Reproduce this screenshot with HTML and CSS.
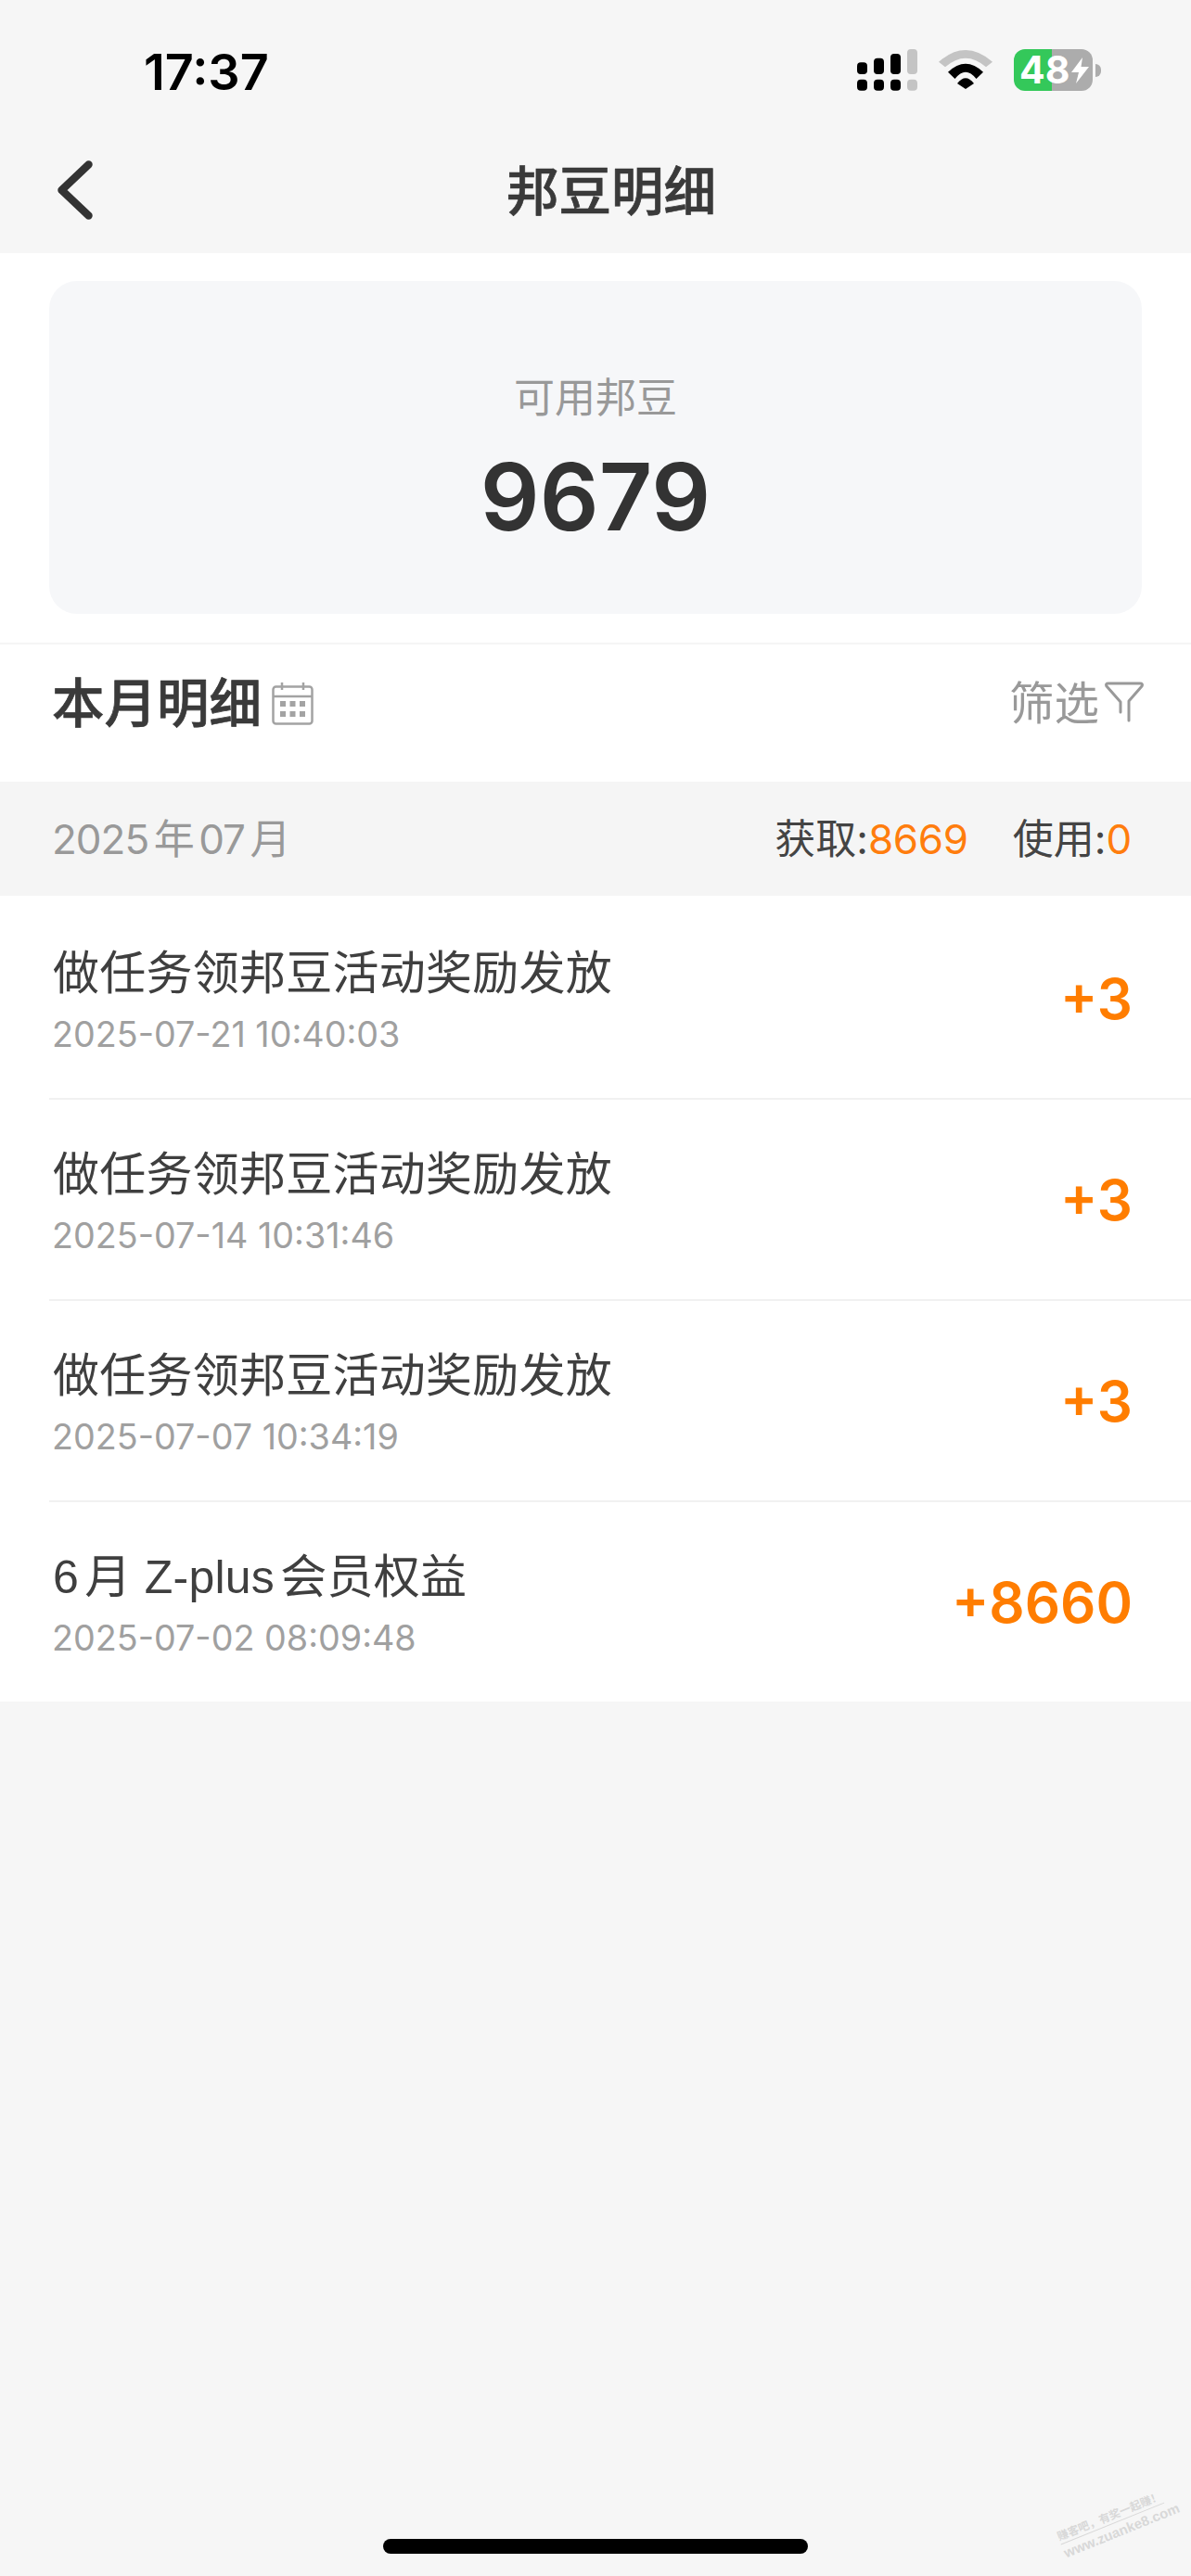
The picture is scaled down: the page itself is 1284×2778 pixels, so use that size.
FILE: index.html
```html
<!DOCTYPE html>
<html lang="zh-CN">
<head>
<meta charset="utf-8">
<title>邦豆明细</title>
<link rel="stylesheet" href="styles.css">
</head>
<body>
<div class="page">
  <header class="top">
    <div class="status">
      <span class="clock">17:37</span>
      <div class="status-icons">
        <svg class="signal" viewBox="0 0 65 45" width="65" height="45">
          <g fill="#000">
            <rect x="0" y="14.3" width="11" height="12.7" rx="4"/>
            <rect x="18" y="9.7" width="11" height="17.3" rx="4"/>
            <rect x="36" y="5" width="11" height="22" rx="4"/>
            <rect x="0" y="32.7" width="11" height="12" rx="4"/>
            <rect x="18" y="32.7" width="11" height="12" rx="4"/>
            <rect x="36" y="32.7" width="11" height="12" rx="4"/>
          </g>
          <g fill="#c4c4c4">
            <rect x="54" y="0" width="11" height="27" rx="4"/>
            <rect x="54" y="32.7" width="11" height="12" rx="4"/>
          </g>
        </svg>
        <svg class="wifi" viewBox="0 0 58 42" width="58" height="42">
          <path fill="#c4c4c4" d="M0 12.7Q29-12.7 58 12.7L51 18.3Q29-.9 7 18.3Z"/>
          <path fill="#000" d="M10 23.7Q29 5.7 48 23.7L40.5 31Q29 16.4 17.5 31Z"/>
          <path fill="#000" d="M20 36Q29 24.6 38 36L29 42Z"/>
        </svg>
        <div class="battery-wrap">
          <div class="battery">
            <span class="battery-num">48</span>
            <svg class="bolt" viewBox="0 0 19 28" width="19" height="28"><path fill="#fff" d="M12 0L0 16H8L5 28L19 10H10.5Z"/></svg>
          </div>
          <span class="battery-nub"></span>
        </div>
      </div>
    </div>
    <nav class="nav">
      <svg class="back" viewBox="0 0 40 64" width="40" height="64"><path d="M34.500 4.500L5.500 32L34.500 59.500" fill="none" stroke="#333" stroke-width="8.500" stroke-linecap="round" stroke-linejoin="round"/></svg>
      <h1 class="nav-title">邦豆明细</h1>
    </nav>
  </header>

  <section class="balance">
    <div class="balance-card">
      <div class="balance-label">可用邦豆</div>
      <div class="balance-value">9679</div>
    </div>
  </section>

  <section class="month-head">
    <div class="month-left">
      <h2 class="month-title">本月明细</h2>
      <svg class="cal" viewBox="0 0 45 46" width="45" height="46">
        <rect x="1.500" y="4.500" width="42" height="40" rx="3" fill="none" stroke="#a3a3a3" stroke-width="2.500"/>
        <path d="M1.500 15H43.500M11 0V8M34 0V8" fill="none" stroke="#a3a3a3" stroke-width="2.500"/>
        <g fill="#a3a3a3">
          <rect x="9" y="20" width="6" height="6"/><rect x="19.500" y="20" width="6" height="6"/><rect x="30" y="20" width="6" height="6"/>
          <rect x="9" y="31" width="6" height="6"/><rect x="19.500" y="31" width="6" height="6"/><rect x="30" y="31" width="6" height="6"/>
        </g>
      </svg>
    </div>
    <div class="month-right">
      <span class="filter-text">筛选</span>
      <svg class="filter" viewBox="0 0 44 44" width="44" height="44"><path d="M18 33V22L3 5Q1.500 2 5 2H39Q42.500 2 41 5L27 21V42" fill="none" stroke="#999" stroke-width="3" stroke-linecap="round" stroke-linejoin="round"/></svg>
    </div>
  </section>

  <section class="summary">
    <span class="summary-date">2025年07月</span>
    <div class="summary-stats">
      <span class="stat">获取:<em class="stat-num">8669</em></span>
      <span class="stat">使用:<em class="stat-num">0</em></span>
    </div>
  </section>

  <ul class="records">
    <li class="record">
      <div class="record-main"><div class="record-title">做任务领邦豆活动奖励发放</div><div class="record-time">2025-07-21 10:40:03</div></div>
      <div class="record-amount">+3</div>
    </li>
    <li class="record">
      <div class="record-main"><div class="record-title">做任务领邦豆活动奖励发放</div><div class="record-time">2025-07-14 10:31:46</div></div>
      <div class="record-amount">+3</div>
    </li>
    <li class="record">
      <div class="record-main"><div class="record-title">做任务领邦豆活动奖励发放</div><div class="record-time">2025-07-07 10:34:19</div></div>
      <div class="record-amount">+3</div>
    </li>
    <li class="record">
      <div class="record-main"><div class="record-title">6月 Z-plus会员权益</div><div class="record-time">2025-07-02 08:09:48</div></div>
      <div class="record-amount">+8660</div>
    </li>
  </ul>

  <div class="home-bar"></div>
  <div class="watermark"><div class="wm-cn">赚客吧，有奖一起赚！</div><div class="wm-en">www.zuanke8.com</div></div>
</div>
</body>
</html>
```

FILE: styles.css
```css
* { box-sizing: border-box; }
html, body { margin: 0; padding: 0; }
body {
  background: #f6f6f6;
  font-family: Inter, "Noto Sans CJK SC", sans-serif;
  text-autospace: normal;
  color: #333;
}
.page {
  position: relative;
  width: 1284px;
  height: 2778px;
  overflow: hidden;
  display: flex;
  flex-direction: column;
}

/* status + nav */
.top { height: 273px; background: #f6f6f6; }
.status {
  height: 146px;
  padding: 54px 97px 0 155px;
  display: flex;
  justify-content: space-between;
  align-items: flex-start;
}
.clock {
  font-size: 54px;
  line-height: 48px;
  font-weight: 600;
  color: #000;
}
.status-icons { display: flex; align-items: flex-start; margin-top: -1px; }
.signal { display: block; margin-right: 23px; }
.wifi { display: block; margin-top: 1px; margin-right: 23px; }
.battery-wrap { display: flex; align-items: center; gap: 3px; height: 45px; }
.battery {
  width: 85px;
  height: 45px;
  border-radius: 12px;
  background: linear-gradient(90deg, #34c85a 48%, #acacac 48%);
  display: flex;
  align-items: center;
  padding-left: 6px;
}
.battery-num {
  font-size: 41px;
  line-height: 45px;
  font-weight: 700;
  color: #fff;
}
.bolt { display: block; margin-left: 2px; }
.battery-nub {
  width: 6px;
  height: 14px;
  background: #acacac;
  border-radius: 0 7px 7px 0;
}
.nav {
  position: relative;
  height: 127px;
  padding-bottom: 6px;
  display: flex;
  justify-content: center;
  align-items: center;
}
.back { position: absolute; left: 61px; top: 27px; display: block; }
.nav-title {
  margin: 0;
  font-size: 56.500px;
  line-height: 70px;
  font-weight: 500;
  -webkit-text-stroke: 0.7px #3a3a3a;
  color: #3a3a3a;
  transform: translateX(17px);
}

/* balance */
.balance {
  background: #fff;
  padding: 30px 53px 31px;
  border-bottom: 2px solid #f5f5f5;
}
.balance-card {
  height: 359px;
  border-radius: 30px;
  background: #f6f7f9;
  display: flex;
  flex-direction: column;
  align-items: center;
  padding-top: 94px;
}
.balance-label {
  font-size: 44px;
  line-height: 64px;
  color: #999;
}
.balance-value {
  margin-top: 15px;
  font-size: 100px;
  line-height: 120px;
  font-weight: 600;
  color: #333;
}

/* month heading */
.month-head {
  height: 148px;
  background: #fff;
  padding: 0 50px 20px 56px;
  display: flex;
  justify-content: space-between;
  align-items: center;
}
.month-left, .month-right { display: flex; align-items: center; }
.month-title {
  margin: 0;
  font-size: 56.500px;
  line-height: 70px;
  font-weight: 500;
  -webkit-text-stroke: 0.7px #3a3a3a;
  color: #3a3a3a;
}
.cal { display: block; margin-left: 11px; }
.filter-text { font-size: 48.500px; line-height: 64px; color: #999; }
.filter { display: block; margin-left: 5px; margin-top: -4px; }

/* summary band */
.summary {
  height: 123px;
  background: #f5f5f5;
  padding: 0 64px 0 56px;
  display: flex;
  justify-content: space-between;
  align-items: center;
  font-size: 44px;
  line-height: 60px;
}
.summary-date { color: #999; letter-spacing: -1px; }
.summary-stats { display: flex; gap: 48px; }
.stat { color: #444; text-autospace: no-autospace; }
.stat-num { font-style: normal; color: #ff7d0d; letter-spacing: -0.3px; }

/* records */
.records {
  list-style: none;
  margin: 0;
  padding: 3px 0 0 53px;
  background: #fff;
}
.record {
  height: 217px;
  padding: 0 63px 0 4px;
  border-bottom: 2px solid #f1f1f1;
  display: flex;
  justify-content: space-between;
  align-items: center;
}
.record:last-child { height: 215px; border-bottom: 0; }
.record-main { margin-top: 3px; }
.record-title {
  font-family: "Liberation Sans", "Noto Sans CJK SC", sans-serif;
  font-size: 50px;
  line-height: 66px;
  letter-spacing: 0.25px;
  color: #3f3f3f;
}
.record-time {
  margin: 7px 0 0 -1px;
  font-size: 37.700px;
  line-height: 50px;
  color: #a0a0a0;
}
.record-amount {
  font-size: 60px;
  line-height: 80px;
  font-weight: 600;
  color: #ff7d00;
}

/* home indicator */
.home-bar {
  margin: auto auto 24px;
  width: 458px;
  height: 16px;
  border-radius: 8px;
  background: #000;
}

/* forum watermark */
.watermark {
  position: absolute;
  left: 1140px;
  top: 2707px;
  width: 120px;
  text-align: center;
  transform: rotate(-22deg);
  color: #d8d8d8;
  line-height: 1;
}
.wm-cn { font-size: 12px; font-weight: 700; border-bottom: 1px solid #d8d8d8; padding-bottom: 2px; white-space: nowrap; }
.wm-en { font-family: "Liberation Sans", sans-serif; font-size: 15px; font-weight: 700; padding-top: 2px; white-space: nowrap; }
```
